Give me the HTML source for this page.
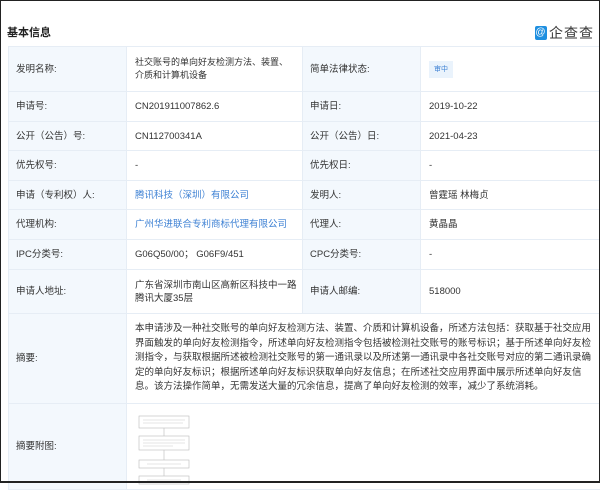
<!DOCTYPE html>
<html><head><meta charset="utf-8"><style>
*{margin:0;padding:0;box-sizing:border-box}
body{width:600px;height:483px;overflow:hidden;background:#fff;font-family:"Liberation Sans","Noto Sans CJK SC",sans-serif;font-size:9.5px;color:#333;position:relative}
.frame{position:absolute;left:0;top:0;width:600px;height:483px;border:1px solid #222;border-bottom:2px solid #222}
.h{position:absolute;left:7px;top:24px;font-size:11px;font-weight:bold;color:#222}
.logo{position:absolute;left:535px;top:23px;display:flex;align-items:center;font-size:14px;color:#3a3a3a;letter-spacing:1px}
.logo i{display:inline-block;width:12px;height:14px;background:#1e8fe0;border-radius:2px;margin-right:2px;color:#fff;font-style:normal;font-size:10px;text-align:center;line-height:14px}
table{position:absolute;left:8px;top:46px;width:592px;border-collapse:collapse;table-layout:fixed}
td{border:1px solid #e6edf5;padding:0 8px;line-height:13px;vertical-align:middle}
td.l{background:#f3f8fd;padding-left:7px}
a{color:#3f82d4;text-decoration:none}
.tag{display:inline-block;background:#eaf3fc;color:#3f82d4;font-size:7px;padding:2px 5px}
</style></head><body>
<div class="h">基本信息</div>
<div class="logo"><i>@</i>企查查</div>
<table>
<col style="width:118px"><col style="width:176px"><col style="width:118px"><col style="width:180px">
<tr style="height:45px"><td class="l">发明名称:</td><td style="font-size:9px">社交账号的单向好友检测方法、装置、<br>介质和计算机设备</td><td class="l">简单法律状态:</td><td><span class="tag">审中</span></td></tr>
<tr style="height:30px"><td class="l">申请号:</td><td>CN201911007862.6</td><td class="l">申请日:</td><td>2019-10-22</td></tr>
<tr style="height:29px"><td class="l">公开（公告）号:</td><td>CN112700341A</td><td class="l">公开（公告）日:</td><td>2021-04-23</td></tr>
<tr style="height:30px"><td class="l">优先权号:</td><td>-</td><td class="l">优先权日:</td><td>-</td></tr>
<tr style="height:29px"><td class="l">申请（专利权）人:</td><td><a>腾讯科技（深圳）有限公司</a></td><td class="l">发明人:</td><td>曾霆瑶 林梅贞</td></tr>
<tr style="height:30px"><td class="l">代理机构:</td><td><a>广州华进联合专利商标代理有限公司</a></td><td class="l">代理人:</td><td>黄晶晶</td></tr>
<tr style="height:30px"><td class="l">IPC分类号:</td><td>G06Q50/00； G06F9/451</td><td class="l">CPC分类号:</td><td>-</td></tr>
<tr style="height:44px"><td class="l">申请人地址:</td><td style="white-space:nowrap">广东省深圳市南山区高新区科技中一路<br>腾讯大厦35层</td><td class="l">申请人邮编:</td><td>518000</td></tr>
<tr style="height:90px"><td class="l">摘要:</td><td colspan="3" style="line-height:14.5px">本申请涉及一种社交账号的单向好友检测方法、装置、介质和计算机设备，所述方法包括：获取基于社交应用界面触发的单向好友检测指令，所述单向好友检测指令包括被检测社交账号的账号标识；基于所述单向好友检测指令，与获取根据所述被检测社交账号的第一通讯录以及所述第一通讯录中各社交账号对应的第二通讯录确定的单向好友标识；根据所述单向好友标识获取单向好友信息；在所述社交应用界面中展示所述单向好友信息。该方法操作简单，无需发送大量的冗余信息，提高了单向好友检测的效率，减少了系统消耗。</td></tr>
<tr style="height:80px"><td class="l">摘要附图:</td><td colspan="3" style="vertical-align:top;padding-top:6px">
<svg width="60" height="75" viewBox="0 0 60 75"><g fill="none" stroke="#bbb" stroke-width=".6"><rect x="4" y="6" width="50" height="12"/><rect x="4" y="26" width="50" height="14"/><rect x="4" y="50" width="50" height="8"/><rect x="4" y="66" width="50" height="8"/><path d="M29 18v8M29 40v10M29 58v8"/></g><g stroke="#ccc" stroke-width=".5"><path d="M8 10h42M8 13h40M8 30h42M8 33h42M8 36h30M12 54h34M12 70h34"/></g></svg></td></tr>
</table>
<div class="frame"></div>
</body></html>
